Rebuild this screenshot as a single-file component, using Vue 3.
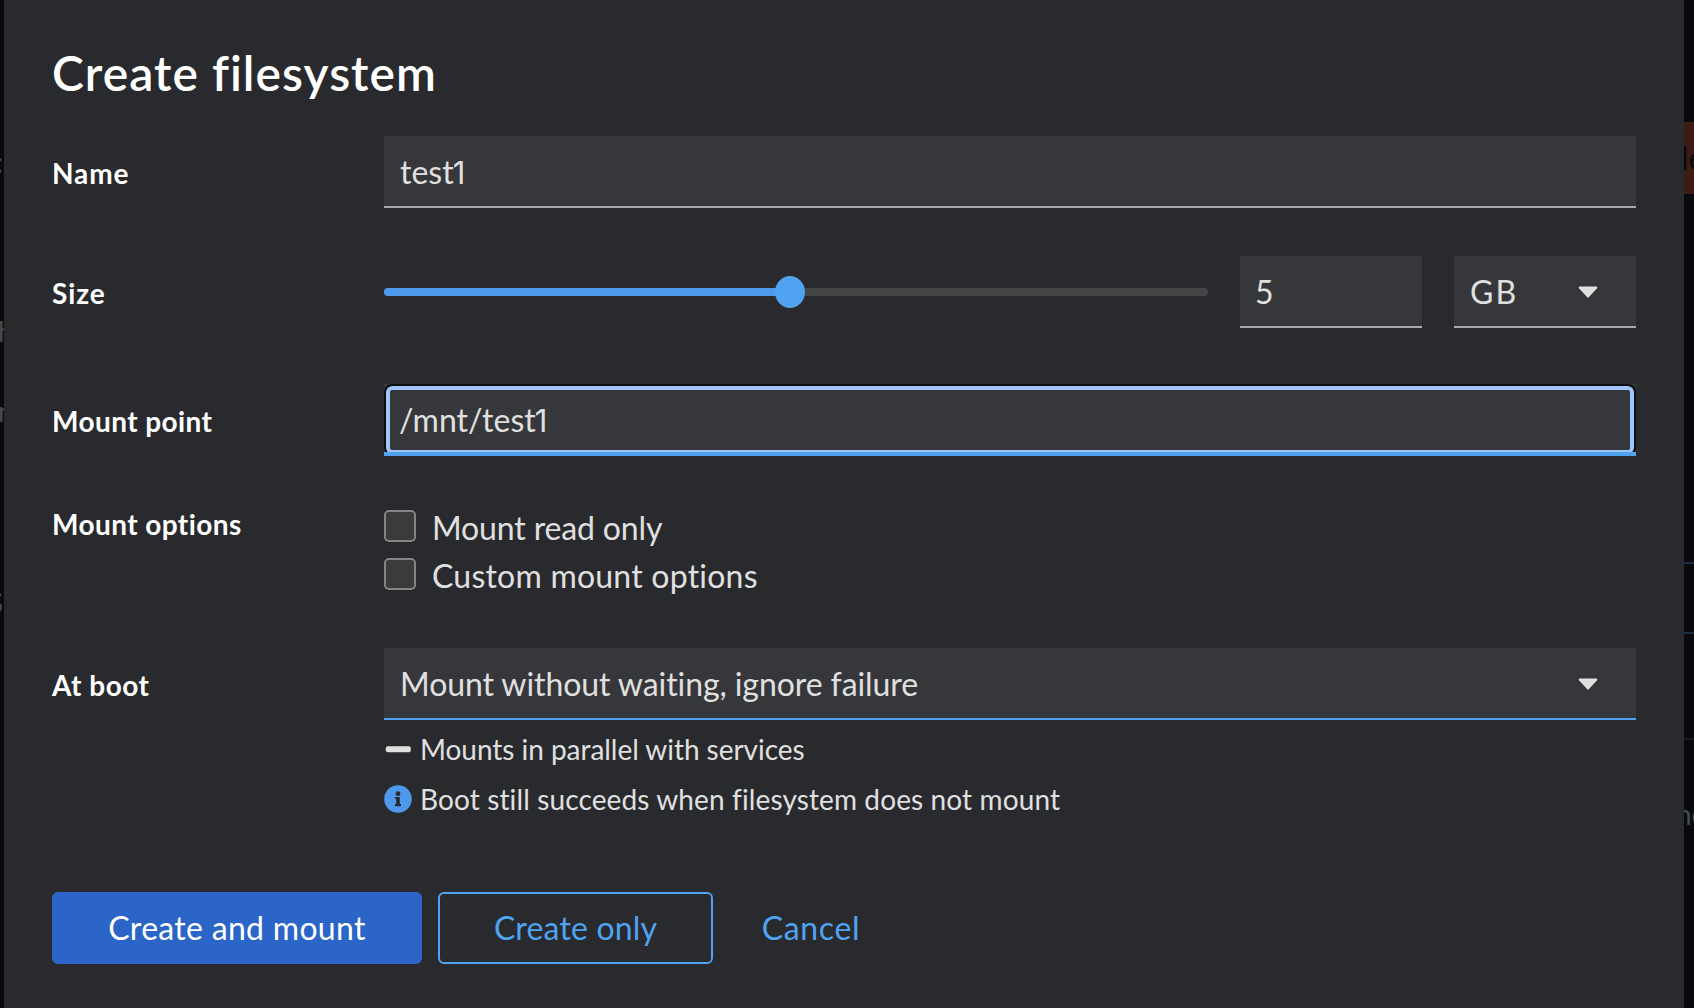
<script setup>
import { ref } from 'vue'

const percent = ref(49.3)
const options = [
  { text: 'Mount read only', track: '-0.14px' },
  { text: 'Custom mount options', track: '0.22px' },
]
</script>

<template>
  <div class="screen">
    <div class="page" aria-hidden="true">
      <span class="bit left colon">:</span>
      <span class="bit left aitch">h</span>
      <span class="bit left en">n</span>
      <span class="bit left ess">s</span>
      <span class="danger">le</span>
      <i class="rule blue first"></i>
      <i class="rule blue second"></i>
      <i class="rule third"></i>
      <span class="bit right">no</span>
    </div>

    <main class="modal">
      <h1>Create filesystem</h1>

      <section class="row">
        <label class="name">Name</label>
        <div class="field">test<span class="one">1</span></div>
      </section>

      <section class="row size-row">
        <label class="size">Size</label>
        <div class="size-controls">
          <div class="slider">
            <div class="fill" :style="{ width: percent + '%' }"></div>
            <div class="thumb" :style="{ left: percent + '%' }"></div>
          </div>
          <div class="field small">5</div>
          <div class="field small select unit">
            <span>GB</span>
            <svg class="caret" viewBox="0 0 20 12"><path d="M1.4.5H18.6Q20 1 19 2.3L11 11Q10 12 9 11L1 2.3Q0 1 1.4.5Z" /></svg>
          </div>
        </div>
      </section>

      <section class="row mount-row">
        <label>Mount point</label>
        <div class="field focused">/mnt/test<span class="one">1</span></div>
      </section>

      <section class="row options-row">
        <label>Mount options</label>
        <div class="checks">
          <div v-for="o in options" :key="o.text" class="check">
            <span class="box"></span>
            <span class="check-text" :style="{ letterSpacing: o.track }">{{ o.text }}</span>
          </div>
        </div>
      </section>

      <section class="row boot-row">
        <label class="boot">At boot</label>
        <div>
          <div class="field select active">
            <span>Mount without waiting, ignore failure</span>
            <svg class="caret" viewBox="0 0 20 12"><path d="M1.4.5H18.6Q20 1 19 2.3L11 11Q10 12 9 11L1 2.3Q0 1 1.4.5Z" /></svg>
          </div>
          <div class="help">
            <svg viewBox="0 0 28 28"><rect x="1.8" y="11.2" width="25" height="6" rx="2" fill="#e0e0e0" /></svg>
            <span>Mounts in parallel with services</span>
          </div>
          <div class="help info">
            <svg viewBox="0 0 28 28">
              <circle cx="14" cy="14" r="13.8" fill="#4f99ec" />
              <circle cx="14" cy="8.7" r="2.4" fill="#292a2d" />
              <path d="M11.2 12H15.8V18.9H17V21.2H11V18.9H12.2V14.3H11.2Z" fill="#292a2d" />
            </svg>
            <span>Boot still succeeds when filesystem does not mount</span>
          </div>
        </div>
      </section>

      <footer>
        <button class="primary">Create and mount</button>
        <button class="secondary">Create only</button>
        <button class="link">Cancel</button>
      </footer>
    </main>
  </div>
</template>

<style>
body { margin: 0; background: #090a0b; }
</style>

<style scoped>
* { box-sizing: border-box; }
.screen {
  position: relative;
  width: 1694px;
  height: 1008px;
  overflow: hidden;
  background: #090a0b;
  color: #e0e0e0;
  font: 400 32px Lato, sans-serif;
  font-variant-ligatures: none;
}
.page { position: absolute; inset: 0; }
.bit { position: absolute; color: #494a4a; line-height: 36px; }
.left { left: -1px; font-size: 28px; }
.colon { left: -4px; top: 144px; }
.aitch { top: 313px; left: -2px; }
.en { top: 393px; left: -2px; }
.ess { top: 574px; left: -15px; font-size: 42px; font-weight: 600; line-height: 48px; }
.right { left: 1676px; top: 796px; font-size: 28px; }
.danger {
  position: absolute;
  left: 1684px;
  top: 122px;
  width: 10px;
  height: 72px;
  background: #3f1b16;
  color: #090a0b;
  line-height: 72px;
  overflow: hidden;
  text-indent: -3px;
}
.rule { position: absolute; left: 1684px; width: 10px; height: 2px; background: #171819; }
.blue { background: #192d40; }
.first { top: 562px; }
.second { top: 632px; }
.third { top: 738px; }

.modal {
  position: relative;
  display: flex;
  flex-direction: column;
  width: 1680px;
  height: 1008px;
  margin-left: 4px;
  padding: 41px 48px 0;
  background: #292a2d;
}
h1 {
  margin: 0 0 31px;
  height: 64px;
  line-height: 64px;
  font-size: 48px;
  font-weight: 600;
  letter-spacing: 1.02px;
  color: #fff;
}
.row { display: grid; grid-template-columns: 332px 1252px; align-items: start; }
label { height: 72px; color: #fff; font-size: 28px; font-weight: 700; line-height: 74px; letter-spacing: 0.42px; }
.name, .size { letter-spacing: 0.9px; }
.boot { letter-spacing: 0.5px; }
.field {
  position: relative;
  height: 72px;
  padding: 0 16px;
  line-height: 72px;
  background: #36373a;
  border-bottom: 2px solid #a9a9ab;
}
.one { font-family: Inter, sans-serif; font-size: 31px; line-height: 1; margin-left: -1px; }
.size-row { margin-top: 48px; }
.size-controls { display: grid; grid-template-columns: 824px 182px 182px; gap: 32px; align-items: center; }
.slider { position: relative; height: 8px; border-radius: 4px; background: #444547; }
.fill { height: 8px; border-radius: 4px 0 0 4px; background: #4f99ec; }
.thumb { position: absolute; top: -12px; width: 30px; height: 32px; margin-left: -15px; border-radius: 50%; background: #4fa3f1; }
.small { padding-left: 15px; }
.select { display: flex; justify-content: space-between; padding-left: 16px; padding-right: 38px; }
.unit { letter-spacing: 2px; }
.caret { width: 20px; height: 12px; margin-top: 30px; fill: #e0e0e0; }
.active { border-bottom-color: #4fa3f1; letter-spacing: -0.08px; }
.mount-row { margin-top: 56px; }
.focused {
  overflow: hidden;
  border: 0;
  padding-left: 15px;
}
.focused::before {
  content: '';
  position: absolute;
  inset: 0;
  border: 2px solid #0e0f11;
  border-radius: 8px;
  box-shadow: inset 0 0 0 4px #a0c5fa;
}
.focused::after { content: ''; position: absolute; left: 0; right: 0; bottom: 0; height: 4px; background: #4fa3f1; }
.options-row { margin-top: 54px; }
.options-row label { height: 28px; line-height: 28px; }
.checks { display: grid; gap: 16px; }
.check { display: flex; align-items: center; height: 32px; gap: 16px; }
.box { width: 32px; height: 32px; border: 2px solid #858585; border-radius: 5px; background: #3b3b3b; }
.check-text { line-height: 34px; padding-top: 3px; }
.boot-row { margin-top: 58px; }
.help { display: flex; align-items: center; gap: 8px; height: 30px; margin-top: 14px; font-size: 28px; letter-spacing: -0.04px; }
.help svg { width: 28px; height: 28px; }
.info { margin-top: 20px; letter-spacing: 0.12px; }
footer { position: relative; display: flex; gap: 16px; margin-top: 78px; }
button {
  height: 72px;
  padding: 0 0 1px;
  border: 0;
  border-radius: 6px;
  background: none;
  color: #4fa3f1;
  font: inherit;
}
.primary { width: 370px; background: #2a65c7; color: #fff; letter-spacing: 0.3px; }
.secondary { width: 275px; border: 2px solid #4fa3f1; letter-spacing: 0.16px; }
.link { width: 164px; letter-spacing: 0.66px; }
</style>
